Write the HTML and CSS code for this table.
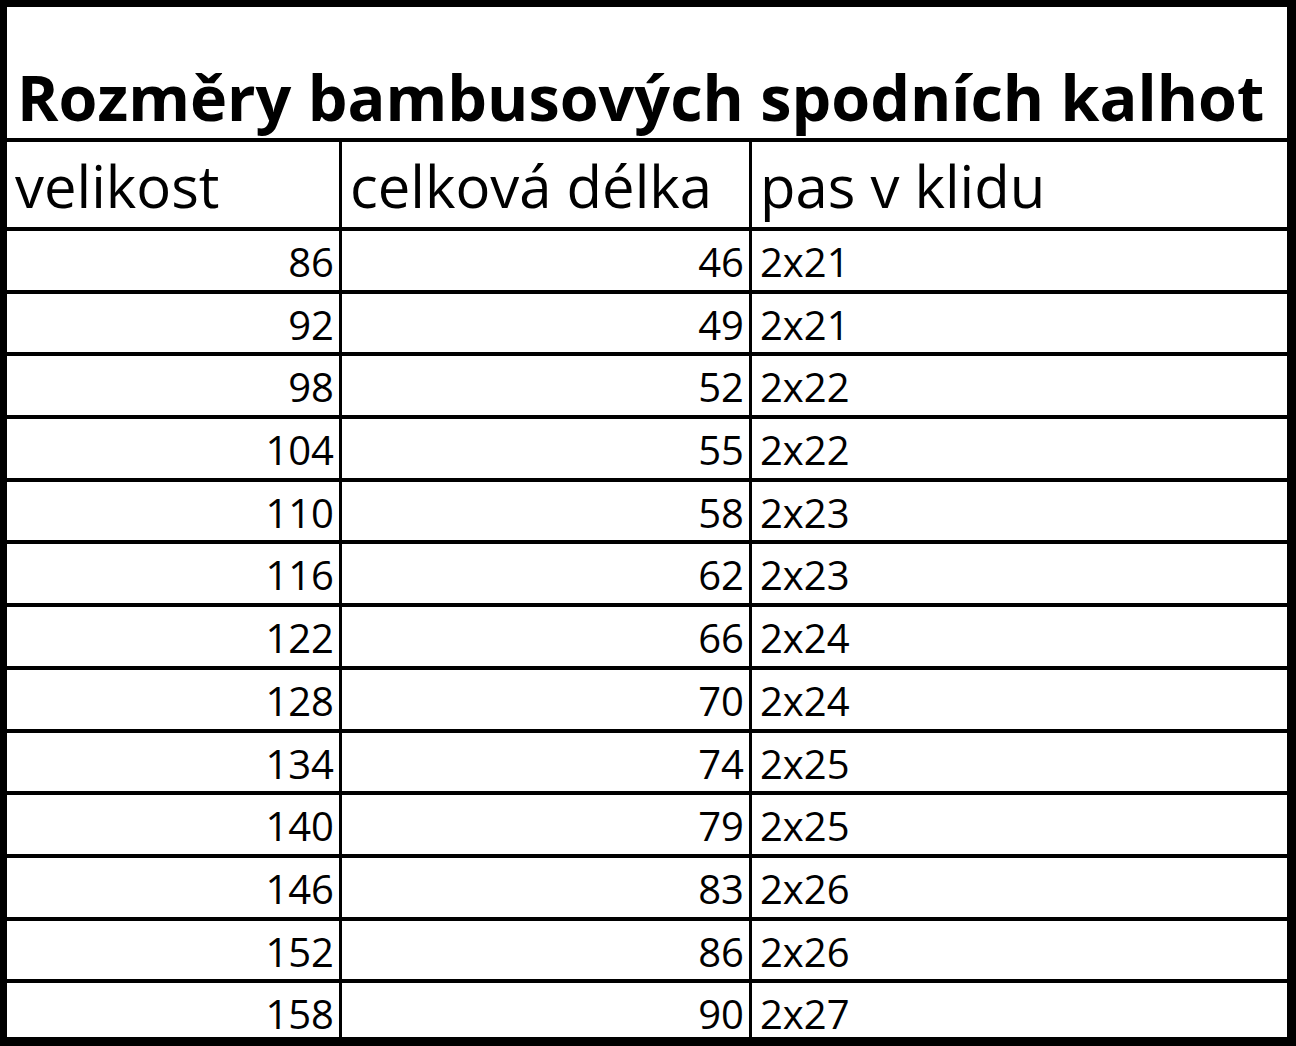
FILE: index.html
```html
<!DOCTYPE html>
<html lang="cs">
<head>
<meta charset="utf-8">
<title>Rozměry bambusových spodních kalhot</title>
<link rel="stylesheet" href="styles.css">
</head>
<body>
<div class="sheet">
  <div class="title">Rozměry bambusových spodních kalhot</div>
  <div class="grid">
    <div class="cell head">velikost</div>
    <div class="cell head">celková délka</div>
    <div class="cell head">pas v klidu</div>

    <div class="cell num">86</div><div class="cell num">46</div><div class="cell txt">2x21</div>
    <div class="cell num">92</div><div class="cell num">49</div><div class="cell txt">2x21</div>
    <div class="cell num">98</div><div class="cell num">52</div><div class="cell txt">2x22</div>
    <div class="cell num">104</div><div class="cell num">55</div><div class="cell txt">2x22</div>
    <div class="cell num">110</div><div class="cell num">58</div><div class="cell txt">2x23</div>
    <div class="cell num">116</div><div class="cell num">62</div><div class="cell txt">2x23</div>
    <div class="cell num">122</div><div class="cell num">66</div><div class="cell txt">2x24</div>
    <div class="cell num">128</div><div class="cell num">70</div><div class="cell txt">2x24</div>
    <div class="cell num">134</div><div class="cell num">74</div><div class="cell txt">2x25</div>
    <div class="cell num">140</div><div class="cell num">79</div><div class="cell txt">2x25</div>
    <div class="cell num">146</div><div class="cell num">83</div><div class="cell txt">2x26</div>
    <div class="cell num">152</div><div class="cell num">86</div><div class="cell txt">2x26</div>
    <div class="cell num">158</div><div class="cell num">90</div><div class="cell txt">2x27</div>
  </div>
</div>
</body>
</html>
```

FILE: styles.css
```css
html, body {
  margin: 0;
  padding: 0;
  background: #ffffff;
}

body {
  font-family: "Open Sans", "Noto Sans", sans-serif;
  color: #000000;
}

.sheet {
  width: 1296px;
  height: 1046px;
  box-sizing: border-box;
  border-style: solid;
  border-color: #000000;
  border-width: 7px 9px 9px 7px;
  display: flex;
  flex-direction: column;
  overflow: hidden;
}

.title {
  flex: 0 0 auto;
  box-sizing: border-box;
  border-bottom: 4px solid #000000;
  height: 135px;
  padding: 59px 0 0 10px;
  font-size: 62.9px;
  font-weight: 700;
  line-height: 1;
  white-space: nowrap;
}

.grid {
  flex: 1 1 auto;
  display: grid;
  grid-template-columns: 332px 407px 1fr;
  grid-template-rows: 85px repeat(12, 58.7px) 1fr;
  gap: 4px 3px;
  background: #000000;
}

.cell {
  background: #ffffff;
  line-height: 1;
  white-space: nowrap;
  box-sizing: border-box;
}

.head {
  font-size: 58px;
  padding: 15px 0 0 8px;
}

.num {
  font-size: 40px;
  padding: 11px 5px 0 0;
  text-align: right;
}

.txt {
  font-size: 40px;
  padding: 11px 0 0 8px;
}
```
